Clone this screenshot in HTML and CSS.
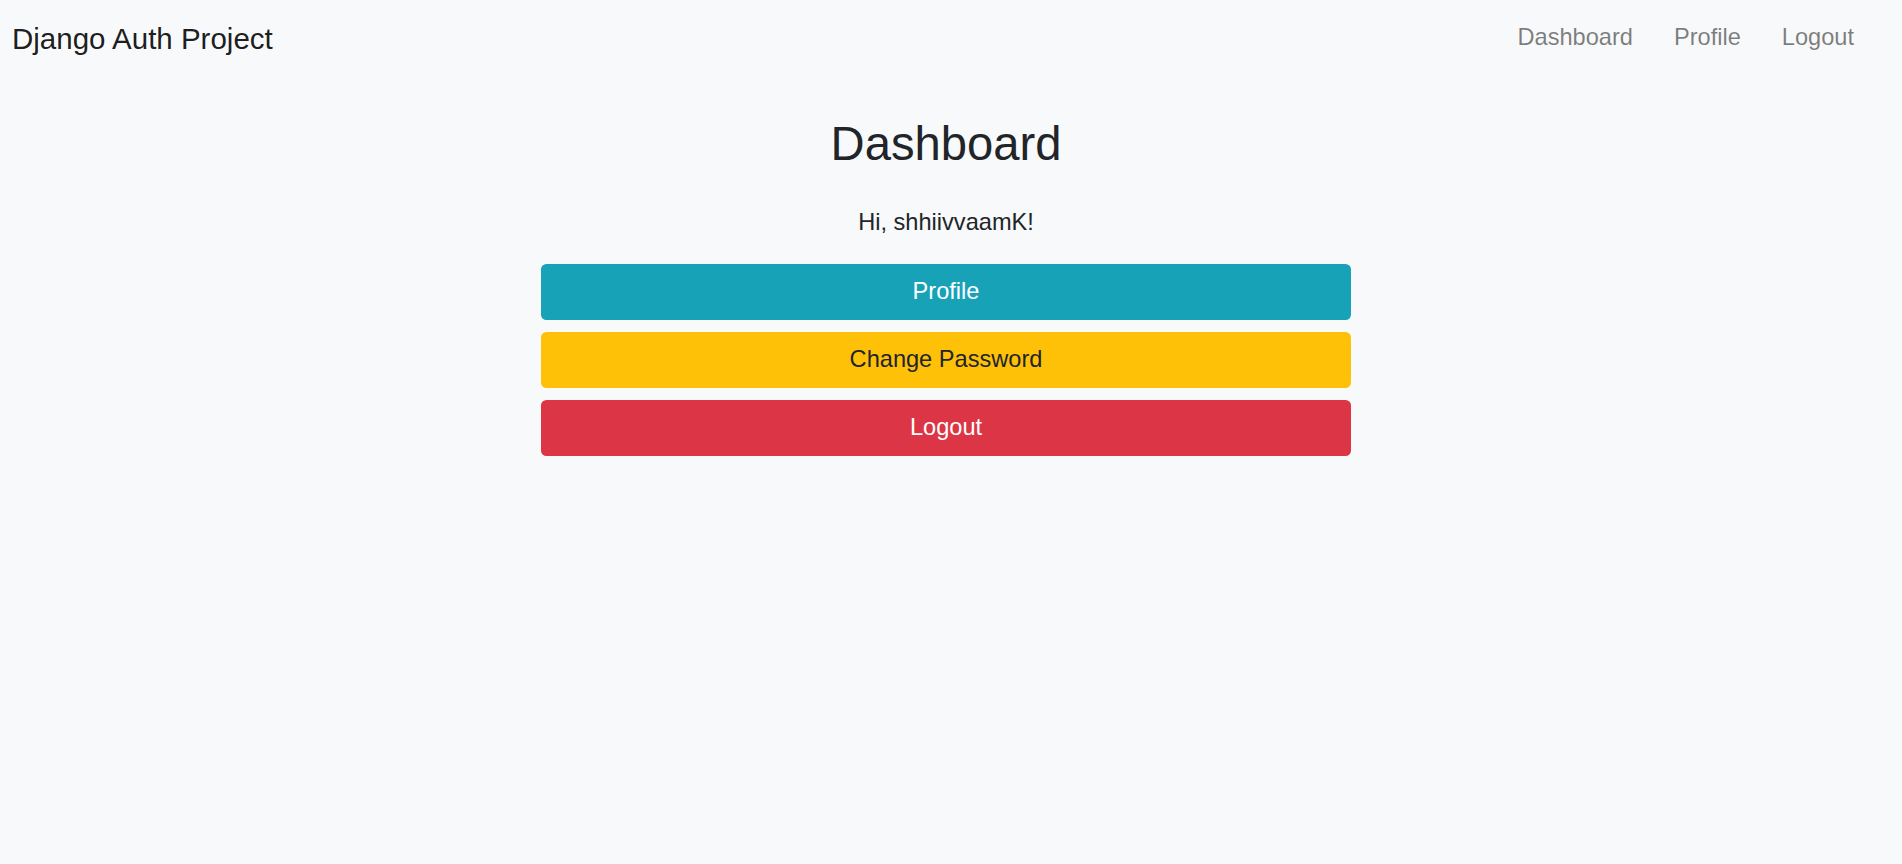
FILE: index.html
```html
<!DOCTYPE html>
<html lang="en">
<head>
<meta charset="utf-8">
<title>Dashboard</title>
<link rel="stylesheet" href="styles.css">
</head>
<body>
<nav class="navbar">
  <a class="brand" href="#">Django Auth Project</a>
  <ul class="nav-links">
    <li><a href="#">Dashboard</a></li>
    <li><a href="#">Profile</a></li>
    <li><a href="#">Logout</a></li>
  </ul>
</nav>
<main class="main">
  <h2 class="title">Dashboard</h2>
  <p class="greeting">Hi, shhiivvaamK!</p>
  <div class="actions">
    <a class="btn btn-info" href="#">Profile</a>
    <a class="btn btn-warning" href="#">Change Password</a>
    <a class="btn btn-danger" href="#">Logout</a>
  </div>
</main>
</body>
</html>
```

FILE: styles.css
```css
html, body {
  margin: 0;
  padding: 0;
}
body {
  background: #f8f9fa;
  color: #212529;
  font-family: "Liberation Sans", Arial, sans-serif;
  min-height: 864px;
}
a { text-decoration: none; }

.navbar {
  display: flex;
  justify-content: space-between;
  align-items: flex-start;
  height: 78px;
  padding: 0 48px 0 12px;
  box-sizing: border-box;
}
.brand {
  padding-top: 17px;
  font-size: 29.5px;
  line-height: 44px;
  color: rgba(0, 0, 0, 0.9);
}
.nav-links {
  display: flex;
  gap: 41px;
  list-style: none;
  margin: 0;
  padding: 20px 0 0 0;
}
.nav-links a {
  display: block;
  font-size: 23.6px;
  line-height: 35px;
  color: rgba(0, 0, 0, 0.5);
}

.main {
  display: flex;
  flex-direction: column;
  align-items: center;
  padding: 38px 10px 0 0;
}
.title {
  margin: 0;
  font-size: 47.2px;
  font-weight: 400;
  line-height: 56.6px;
  color: #212529;
}
.greeting {
  margin: 32px 0 0 0;
  font-size: 23.6px;
  line-height: 35.4px;
}
.actions {
  margin-top: 24px;
  width: 810px;
  display: flex;
  flex-direction: column;
  gap: 12px;
}
.btn {
  display: block;
  height: 56px;
  box-sizing: border-box;
  padding: 10.3px 18px;
  border-radius: 5.5px;
  text-align: center;
  font-size: 23.6px;
  line-height: 35.4px;
}
.btn-info { background: #17a2b8; color: #fff; }
.btn-warning { background: #ffc107; color: #212529; }
.btn-danger { background: #dc3545; color: #fff; }
```
